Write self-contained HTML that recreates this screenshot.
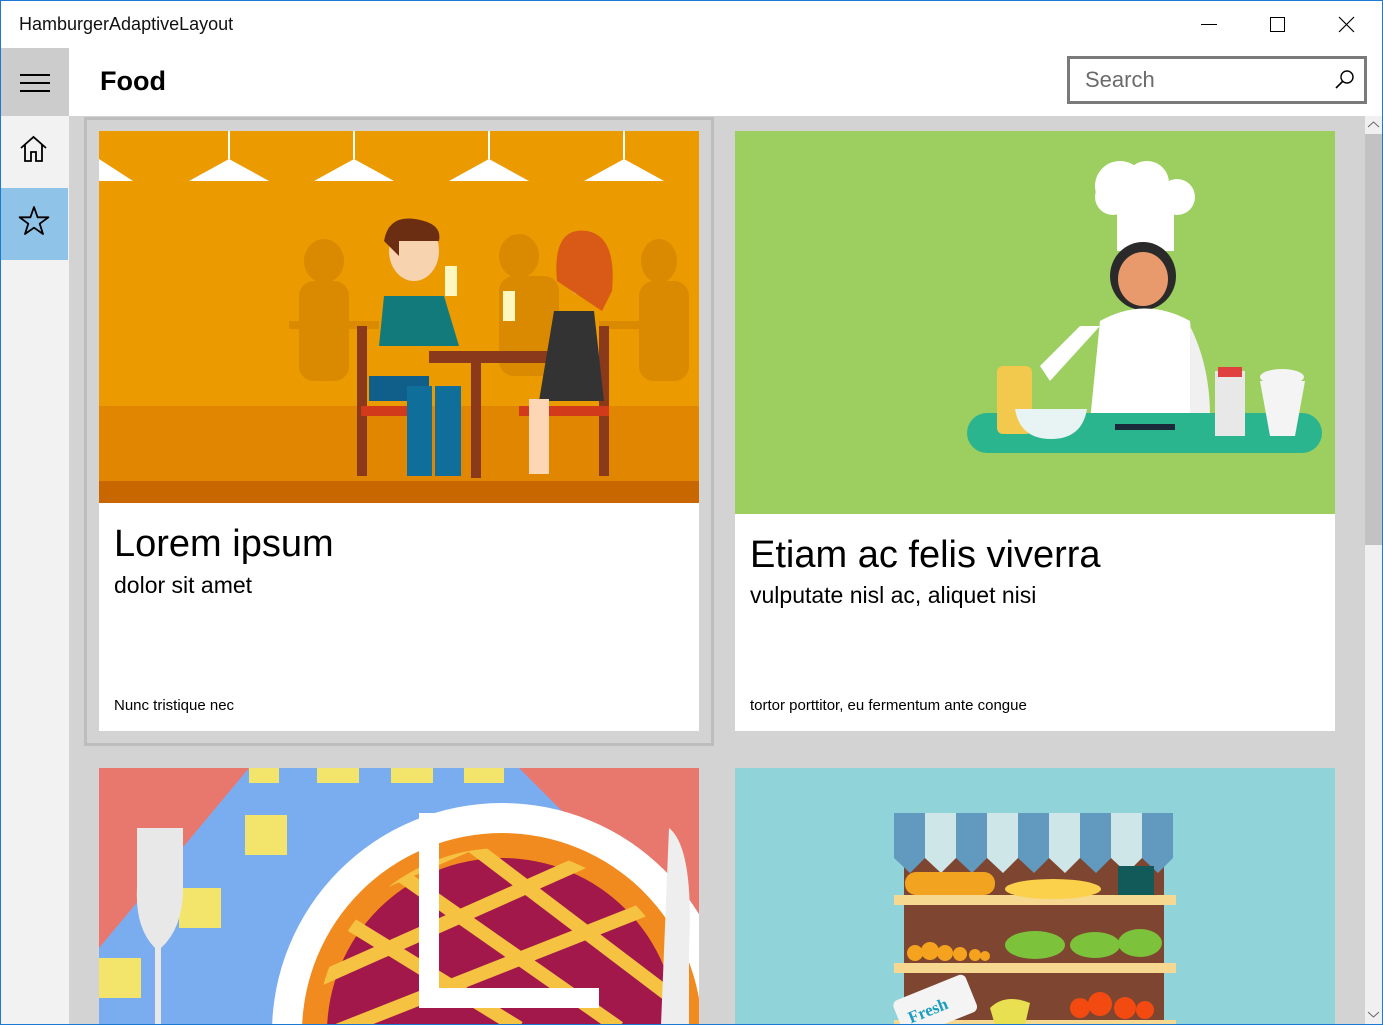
<!DOCTYPE html>
<html><head><meta charset="utf-8"><style>
*{margin:0;padding:0;box-sizing:border-box}
html,body{overflow:hidden}
body{width:1383px;height:1025px;overflow:hidden;background:#fff;font-family:"Segoe UI","Liberation Sans",sans-serif;position:relative}
.abs{position:absolute}
.frame{position:absolute;left:0;top:0;width:1383px;height:1025px;border:1px solid #1c7ad4;pointer-events:none;z-index:10}
.t1{font-size:38px;color:#000;position:absolute;left:15px;white-space:nowrap}
.t2{font-size:23px;color:#000;position:absolute;left:15px;white-space:nowrap}
.t3{font-size:15px;color:#000;position:absolute;left:15px;white-space:nowrap}
</style></head><body>
<div class="frame"></div>
<div class="abs" style="left:19px;top:14px;font-size:18px;color:#111">HamburgerAdaptiveLayout</div>
<div class="abs" style="left:1201px;top:24px;width:16px;height:1px;background:#000"></div>
<div class="abs" style="left:1270px;top:17px;width:15px;height:15px;border:1px solid #000"></div>
<svg class="abs" style="left:1338px;top:16px" width="17" height="17"><path d="M1 1L16 16M16 1L1 16" stroke="#000" stroke-width="1.2"/></svg>
<div class="abs" style="left:1px;top:48px;width:68px;height:977px;background:#f2f2f2"></div>
<div class="abs" style="left:1px;top:48px;width:68px;height:68px;background:#cccccc"></div>
<div class="abs" style="left:20px;top:74px;width:30px;height:2px;background:#000"></div>
<div class="abs" style="left:20px;top:82px;width:30px;height:2px;background:#000"></div>
<div class="abs" style="left:20px;top:90px;width:30px;height:2px;background:#000"></div>
<svg class="abs" style="left:19px;top:135px" width="30" height="28"><path d="M2 13L14.5 2L27 13M6 10V26H12V17H17V26H23V10" fill="none" stroke="#000" stroke-width="1.8"/></svg>
<div class="abs" style="left:1px;top:188px;width:67px;height:72px;background:#90c3e8"></div>
<svg class="abs" style="left:18px;top:205px" width="32" height="32"><path d="M16 2L19.6 12.3H30.4L21.7 18.7L25 29L16 22.7L7 29L10.3 18.7L1.6 12.3H12.4Z" fill="none" stroke="#000" stroke-width="1.8" stroke-linejoin="round"/></svg>
<div class="abs" style="left:100px;top:66px;font-size:27px;font-weight:bold;color:#000">Food</div>
<div class="abs" style="left:1067px;top:56px;width:300px;height:48px;border:3px solid #7a7a7a;background:#fff"></div>
<div class="abs" style="left:1085px;top:67px;font-size:22px;color:#6b6b6b">Search</div>
<svg class="abs" style="left:1334px;top:69px" width="22" height="22"><circle cx="13" cy="8" r="6" fill="none" stroke="#000" stroke-width="1.4"/><path d="M9 12L2 19" stroke="#000" stroke-width="1.6"/></svg>
<div class="abs" style="left:69px;top:116px;width:1296px;height:909px;background:#d3d3d3"></div>
<div class="abs" style="left:1365px;top:116px;width:17px;height:909px;background:#f0f0f0"></div>
<div class="abs" style="left:1365px;top:134px;width:17px;height:411px;background:#c2c2c2"></div>
<svg class="abs" style="left:1367px;top:120px" width="13" height="9"><path d="M1 7L6.5 2L12 7" fill="none" stroke="#666" stroke-width="1"/></svg>
<svg class="abs" style="left:1367px;top:1010px" width="13" height="9"><path d="M1 2L6.5 7L12 2" fill="none" stroke="#666" stroke-width="1"/></svg>
<div class="abs" style="left:84px;top:117px;width:630px;height:629px;border:3px solid #bdbdbd"></div>
<div class="abs" style="left:99px;top:131px;width:600px;height:600px;background:#fff">
<svg width="600" height="372" style="display:block">
<rect width="600" height="372" fill="#eb9a00"/>
<rect y="275" width="600" height="75" fill="#e08600"/>
<rect y="350" width="600" height="22" fill="#c86600"/>
<g fill="#fff"><path d="M0 28L34 50H0Z"/><path d="M90 50L130 28L170 50Z"/><path d="M215 50L255 28L295 50Z"/><path d="M350 50L390 28L430 50Z"/><path d="M485 50L525 28L565 50Z"/></g>
<g stroke="#fff" stroke-width="2"><path d="M130 0V28M255 0V28M390 0V28M525 0V28"/></g>
<g fill="#d98a00"><ellipse cx="225" cy="130" rx="20" ry="22"/><rect x="200" y="150" width="50" height="100" rx="15"/><ellipse cx="420" cy="125" rx="20" ry="22"/><rect x="400" y="145" width="60" height="100" rx="15"/><ellipse cx="560" cy="130" rx="18" ry="22"/><rect x="540" y="150" width="50" height="100" rx="15"/><rect x="190" y="190" width="90" height="8"/><rect x="500" y="190" width="90" height="8"/></g>
<rect x="330" y="220" width="130" height="12" fill="#8a3a1a"/><rect x="372" y="232" width="10" height="115" fill="#8a3a1a"/>
<rect x="258" y="195" width="10" height="150" fill="#8a3a1a"/><rect x="262" y="275" width="60" height="10" fill="#d13a1a"/>
<path d="M285 165h60l15 50h-80z" fill="#127a7a"/><rect x="270" y="245" width="60" height="25" fill="#0f5f8a"/><rect x="308" y="255" width="25" height="90" fill="#0f6e9a"/><rect x="336" y="255" width="26" height="90" fill="#0f6e9a"/>
<ellipse cx="315" cy="120" rx="25" ry="30" fill="#f7d3b0"/><path d="M285 110q5-30 40-20q18 5 15 20h-40v15z" fill="#6b2e12"/>
<rect x="500" y="195" width="10" height="150" fill="#8a3a1a"/><rect x="420" y="275" width="90" height="10" fill="#d13a1a"/>
<path d="M455 180h40l10 90h-65z" fill="#333"/><rect x="430" y="268" width="20" height="75" fill="#fcd6b5"/>
<ellipse cx="485" cy="135" rx="22" ry="30" fill="#f7d3b0"/><path d="M458 150q-5-55 30-50q30 5 25 60l-10 20z" fill="#d95a16"/>
<rect x="346" y="135" width="12" height="30" fill="#fff7c0"/><rect x="404" y="160" width="12" height="30" fill="#fff7c0"/>
</svg>
<div class="t1" style="top:392px">Lorem ipsum</div>
<div class="t2" style="top:441px">dolor sit amet</div>
<div class="t3" style="top:566px">Nunc tristique nec</div>
</div>
<div class="abs" style="left:735px;top:131px;width:600px;height:600px;background:#fff">
<svg width="600" height="383" style="display:block">
<rect width="600" height="383" fill="#9ccf5f"/>
<circle cx="385" cy="55" r="25" fill="#fff"/><circle cx="442" cy="66" r="18" fill="#fff"/><circle cx="378" cy="66" r="18" fill="#fff"/><circle cx="412" cy="52" r="22" fill="#fff"/><rect x="382" y="70" width="57" height="50" fill="#fff"/>
<ellipse cx="408" cy="145" rx="33" ry="34" fill="#2a2a2a"/><ellipse cx="408" cy="148" rx="25" ry="27" fill="#e89a6c"/>
<path d="M365 190q45-25 90 0l10 100h-110z" fill="#fff"/><path d="M365 195l-50 55l-10-15l40-40z" fill="#fff"/>
<path d="M455 195q20 40 20 90h-20z" fill="#f0f0f0"/>
<rect x="232" y="282" width="355" height="40" rx="20" fill="#2bb58f"/>
<rect x="262" y="235" width="35" height="68" rx="6" fill="#f2c94c"/>
<path d="M280 278h72q-5 30-36 30q-31 0-36-30z" fill="#e8f4f4"/>
<rect x="480" y="240" width="30" height="65" fill="#e8e8e8"/><rect x="483" y="236" width="24" height="10" fill="#e04040"/>
<path d="M525 250h45l-10 55h-25z" fill="#f4f4f4"/><ellipse cx="547" cy="246" rx="22" ry="8" fill="#f4f4f4"/>
<rect x="380" y="293" width="60" height="6" fill="#1a2a3a"/>
</svg>
<div class="t1" style="top:403px">Etiam ac felis viverra</div>
<div class="t2" style="top:451px">vulputate nisl ac, aliquet nisi</div>
<div class="t3" style="top:566px">tortor porttitor, eu fermentum ante congue</div>
</div>
<svg class="abs" style="left:99px;top:768px" width="600" height="257">
<defs><clipPath id="pc"><circle cx="403" cy="265" r="185"/></clipPath></defs>
<rect width="600" height="257" fill="#e8776d"/>
<path d="M150 0H420L600 180V257H0V180Z" fill="#7aacf0"/>
<g fill="#f3e46c"><rect x="150" y="0" width="30" height="15"/><rect x="218" y="0" width="42" height="15"/><rect x="292" y="0" width="42" height="15"/><rect x="365" y="0" width="40" height="15"/><rect x="146" y="47" width="42" height="40"/><rect x="435" y="47" width="42" height="40"/><rect x="80" y="120" width="42" height="40"/><rect x="510" y="120" width="30" height="40"/><rect x="0" y="190" width="42" height="40"/><rect x="580" y="190" width="20" height="40"/></g>
<circle cx="403" cy="265" r="230" fill="#fff"/>
<circle cx="403" cy="265" r="200" fill="#f28b1f"/>
<circle cx="403" cy="265" r="175" fill="#a3184a"/>
<g stroke="#f5c242" stroke-width="14" clip-path="url(#pc)"><path d="M200 150L500 20M200 220L560 60M220 270L600 120M160 100L420 260M220 50L520 260M310 30L600 250"/></g>
<path d="M330 45V230H500" fill="none" stroke="#fff" stroke-width="20"/>
<path d="M38 60h46v60q0 40-22 60v77h-6v-77q-20-20-18-60z" fill="#e8e8e8"/>
<path d="M570 60q25 20 20 120v77h-28z" fill="#eee"/>
</svg>
<svg class="abs" style="left:735px;top:768px" width="600" height="257">
<rect width="600" height="257" fill="#90d3d8"/>
<rect x="169" y="70" width="260" height="190" fill="#7e4630"/>
<g><path d="M159 45h31v45l-15 15-16-15z" fill="#6299be"/><path d="M190 45h31v45l-15 15-16-15z" fill="#cfe6e8"/><path d="M221 45h31v45l-15 15-16-15z" fill="#6299be"/><path d="M252 45h31v45l-15 15-16-15z" fill="#cfe6e8"/><path d="M283 45h31v45l-15 15-16-15z" fill="#6299be"/><path d="M314 45h31v45l-15 15-16-15z" fill="#cfe6e8"/><path d="M345 45h31v45l-15 15-16-15z" fill="#6299be"/><path d="M376 45h31v45l-15 15-16-15z" fill="#cfe6e8"/><path d="M407 45h31v45l-15 15-16-15z" fill="#6299be"/></g>
<g fill="#f7d890"><rect x="159" y="127" width="282" height="10"/><rect x="159" y="195" width="282" height="10"/><rect x="159" y="252" width="282" height="10"/></g>
<rect x="170" y="104" width="90" height="23" rx="11" fill="#f2a31f"/><ellipse cx="318" cy="121" rx="48" ry="10" fill="#fbd14b"/>
<rect x="383" y="98" width="36" height="29" fill="#125a5a"/>
<g fill="#f5a31f"><circle cx="180" cy="185" r="8"/><circle cx="195" cy="183" r="9"/><circle cx="210" cy="185" r="8"/><circle cx="225" cy="186" r="7"/><circle cx="240" cy="187" r="6"/><circle cx="250" cy="188" r="5"/></g>
<g fill="#7cc23a"><ellipse cx="300" cy="177" rx="30" ry="14"/><ellipse cx="360" cy="177" rx="25" ry="13"/><ellipse cx="405" cy="175" rx="22" ry="14"/></g>
<g fill="#f34a12"><circle cx="345" cy="240" r="10"/><circle cx="365" cy="236" r="12"/><circle cx="390" cy="240" r="11"/><circle cx="410" cy="242" r="9"/></g>
<path d="M255 240q15-15 40-5l-5 22h-30z" fill="#e8e050"/>
<g transform="rotate(-22 200 235)"><rect x="160" y="218" width="78" height="40" rx="6" fill="#f4f4f4"/><text x="170" y="245" font-family="Liberation Serif,serif" font-weight="bold" font-size="17" fill="#1a9ec0">Fresh</text></g>
</svg>
</body></html>
